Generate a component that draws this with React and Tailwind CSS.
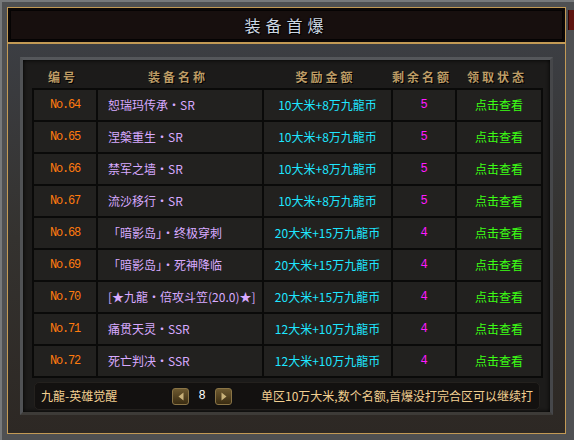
import React from "react";

const rows = [
  { no: "No.64", name: "恕瑞玛传承·SR", reward: "10大米+8万九龍币", left: "5" },
  { no: "No.65", name: "涅槃重生·SR", reward: "10大米+8万九龍币", left: "5" },
  { no: "No.66", name: "禁军之墙·SR", reward: "10大米+8万九龍币", left: "5" },
  { no: "No.67", name: "流沙移行·SR", reward: "10大米+8万九龍币", left: "5" },
  { no: "No.68", name: "「暗影岛」·终极穿刺", reward: "20大米+15万九龍币", left: "4" },
  { no: "No.69", name: "「暗影岛」·死神降临", reward: "20大米+15万九龍币", left: "4" },
  { no: "No.70", name: "[★九龍·倍攻斗笠(20.0)★]", reward: "20大米+15万九龍币", left: "4" },
  { no: "No.71", name: "痛贯天灵·SSR", reward: "12大米+10万九龍币", left: "4" },
  { no: "No.72", name: "死亡判决·SSR", reward: "12大米+10万九龍币", left: "4" },
];

const cols = "grid grid-cols-[62px_164px_127px_62px_84px] gap-x-[2px]";
const cjk = { fontFamily: '"Noto Sans CJK SC", "Noto Sans", sans-serif' };
const mono = { fontFamily: '"Liberation Mono", "DejaVu Sans Mono", monospace' };

function ArrowBtn({ dir }) {
  return (
    <div className="w-[17px] h-[17px] rounded-[3px] border border-[#8a7446] bg-gradient-to-b from-[#6e5a30] to-[#3a2c12] flex items-center justify-center shadow-[0_0_0_1px_#111]">
      <svg width="6" height="9" viewBox="0 0 6 9">
        {dir === "left" ? (
          <path d="M5.5 0.5 L0.5 4.5 L5.5 8.5 Z" fill="#c9b27a" />
        ) : (
          <path d="M0.5 0.5 L5.5 4.5 L0.5 8.5 Z" fill="#c9b27a" />
        )}
      </svg>
    </div>
  );
}

export default function App() {
  return (
    <div
      className="relative w-[574px] h-[440px] bg-[#4f5052] border-l-2 border-t-2 border-[#77797b] pl-[5px] pt-[5px] pr-[8px] pb-[6px]"
      style={cjk}
    >
      {/* little red tab on the right edge */}
      <div className="absolute right-0 top-[8px] w-[6px] h-[20px] bg-[#5e1410] border-l border-[#2a0806]" />

      <div className="w-full h-full border border-[#c39a55] flex flex-col">
        {/* title */}
        <div className="h-[34px] bg-[#0b0707] p-[2px]">
          <div className="h-full bg-[#170f0e] border border-[#050303] flex items-center justify-center">
            <span className="text-[16px] tracking-[5px] text-[#cdd7e2] [text-shadow:0_0_2px_#000,1px_1px_0_#000]">
              装备首爆
            </span>
          </div>
        </div>
        <div className="h-[2px] bg-[#c39a55]" />

        {/* body */}
        <div className="flex-1 bg-gradient-to-b from-[#3c3e43] via-[#34322f] to-[#2d2824] pt-[13px] px-[12px]">
          <div className="border-[3px] border-t-[#55575b] border-l-[#505255] border-r-[#46474a] border-b-[#3d3b38] bg-[#1c1b1a] pl-[9px] pr-[4px] pt-[6px] pb-[2px] shadow-[inset_0_0_4px_#000]">
            {/* header */}
            <div className={`${cols} h-[22px] items-center text-center text-[12px] font-bold tracking-[3px] text-[#bd9c66] [text-shadow:1px_1px_0_#000]`}>
              <span>编号</span>
              <span>装备名称</span>
              <span>奖励金额</span>
              <span>剩余名额</span>
              <span>领取状态</span>
            </div>

            {/* table */}
            <div className={`${cols} w-[511px] gap-y-[2px] bg-[#0a0a09] border-2 border-[#0a0a09] text-[12px]`}>
              {rows.map((r) => (
                <React.Fragment key={r.no}>
                  <div className="h-[30px] bg-[#22211f] flex items-center justify-center text-[#ff7b0f] tracking-[-1.2px]" style={mono}>
                    {r.no}
                  </div>
                  <div className="h-[30px] bg-[#22211f] flex items-center pl-[10px] text-[#d8aaff] whitespace-nowrap">
                    {r.name}
                  </div>
                  <div className="h-[30px] bg-[#22211f] flex items-center justify-center text-[#1ee6ff] whitespace-nowrap">
                    {r.reward}
                  </div>
                  <div className="h-[30px] bg-[#22211f] flex items-center justify-center text-[#ff1aff]" style={mono}>
                    {r.left}
                  </div>
                  <div className="h-[30px] bg-[#22211f] flex items-center justify-center text-[#3cff14]">
                    点击查看
                  </div>
                </React.Fragment>
              ))}
            </div>

            {/* footer */}
            <div className="mt-[4px] ml-[2px] w-[506px] h-[28px] rounded-[5px] bg-[#131110] border border-[#24211e] flex items-center pl-[6px] pr-[6px] text-[12px] text-[#f2cf90]">
              <span className="w-[131px] whitespace-nowrap">九龍-英雄觉醒</span>
              <div className="flex items-center gap-[8px]">
                <ArrowBtn dir="left" />
                <span className="w-[10px] text-center text-white text-[12px]" style={mono}>8</span>
                <ArrowBtn dir="right" />
              </div>
              <span className="ml-auto whitespace-nowrap">单区10万大米,数个名额,首爆没打完合区可以继续打</span>
            </div>
          </div>
        </div>
      </div>
    </div>
  );
}
